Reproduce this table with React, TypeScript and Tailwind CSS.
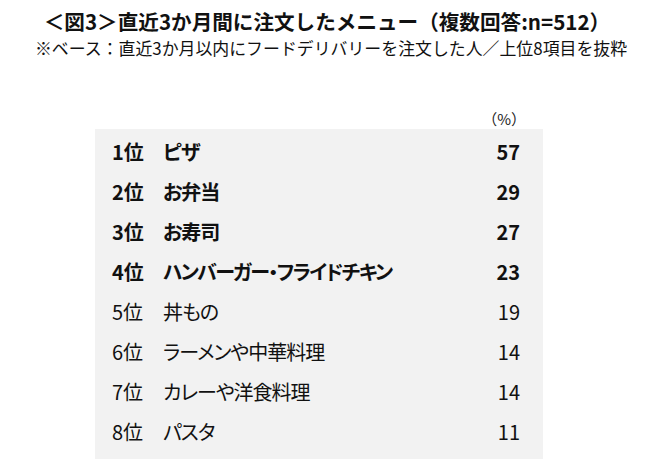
import React from 'react';

const items = [
  { rank: 1, name: 'ピザ', value: 57 },
  { rank: 2, name: 'お弁当', value: 29 },
  { rank: 3, name: 'お寿司', value: 27 },
  { rank: 4, name: 'ハンバーガー・フライドチキン', value: 23 },
  { rank: 5, name: '丼もの', value: 19 },
  { rank: 6, name: 'ラーメンや中華料理', value: 14 },
  { rank: 7, name: 'カレーや洋食料理', value: 14 },
  { rank: 8, name: 'パスタ', value: 11 },
];

export default function App() {
  return (
    <div className="w-[656px] h-[467px] bg-white text-[#111] font-['Noto_Sans_CJK_JP',sans-serif]">
      {/* Heading */}
      <div className="pt-[7px] text-center">
        <h1 className="text-[20.6px] font-bold leading-[28px] pr-[2px] whitespace-nowrap">
          ＜図3＞直近3か月間に注文したメニュー（複数回答:n=512）
        </h1>
        <p className="mt-[2px] text-[16.9px] leading-[22px] pl-[6px] whitespace-nowrap">
          ※ベース：直近3か月以内にフードデリバリーを注文した人／上位8項目を抜粋
        </p>
      </div>

      {/* Table */}
      <div className="pl-[95px] mt-[49px]">
        <div className="w-[448px] flex justify-end pr-[17px] text-[15px] leading-[21px] text-[#222]">
          （%）
        </div>
        <div className="w-[448px] bg-[#f2f2f2] pt-[3px] pb-[7px]">
          {items.map((item) => (
            <div
              key={item.rank}
              className={`flex items-center h-[40px] text-[20px] ${item.rank <= 4 ? 'font-bold' : 'font-normal'}`}
            >
              <span className="w-[68px] pl-[17px]">{item.rank}位</span>
              <span
                className={`flex-1 [font-feature-settings:'palt'] ${item.name.length > 10 ? 'tracking-[-1.6px]' : 'tracking-[-1px]'}`}
              >
                {item.name}
              </span>
              <span className="pr-[23px]">{item.value}</span>
            </div>
          ))}
        </div>
      </div>
    </div>
  );
}
